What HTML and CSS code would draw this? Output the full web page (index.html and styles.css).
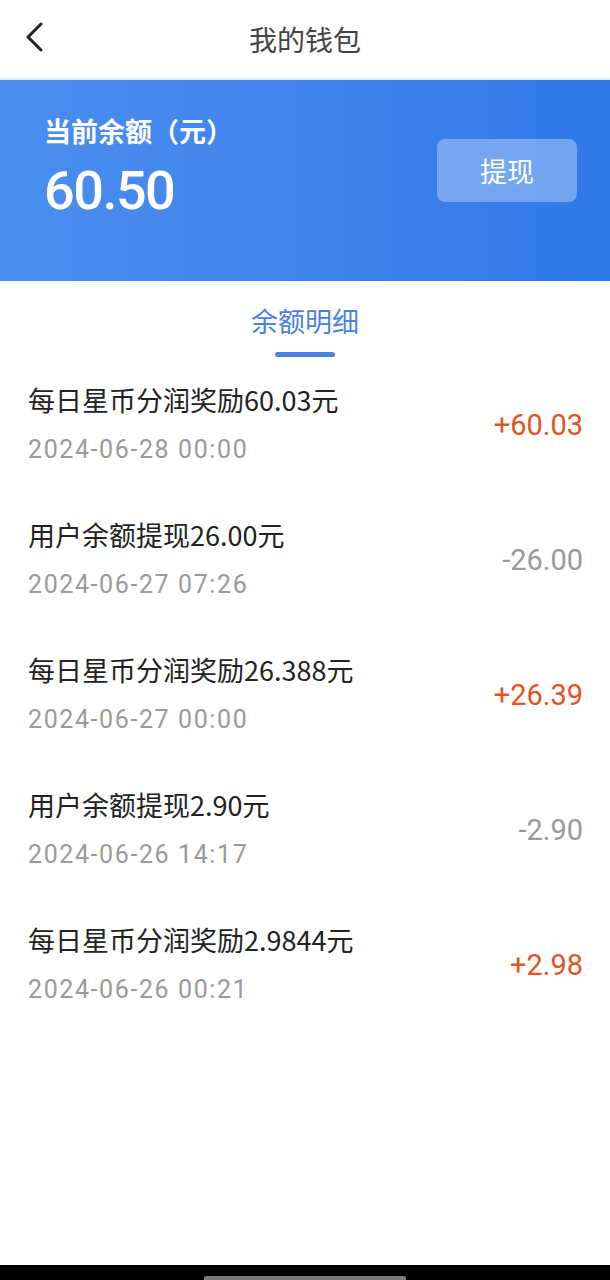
FILE: index.html
```html
<!DOCTYPE html>
<html lang="zh-CN">
<head>
  <meta charset="UTF-8">
  <title>我的钱包</title>
  <meta name="viewport" content="width=device-width, initial-scale=1.0">
  <link rel="stylesheet" href="styles.css">
</head>
<body>
  <div class="page">
    <div class="topbar">
      <button class="back-btn" aria-label="返回">
        <svg width="20" height="30" viewBox="0 0 20 30">
          <path d="M17 2 L4 15 L17 28" fill="none" stroke="#222" stroke-width="3" stroke-linecap="round" stroke-linejoin="round"/>
        </svg>
      </button>
      <h1 class="page-title">我的钱包</h1>
    </div>

    <div class="balance-card">
      <div class="balance-info">
        <div class="balance-label">当前余额（元）</div>
        <div class="balance-value">60.50</div>
      </div>
      <button class="withdraw-btn">提现</button>
    </div>

    <div class="tabs">
      <div class="tab active">余额明细</div>
      <div class="tab-line"></div>
    </div>

    <div class="record-list">
      <div class="record">
        <div class="record-main">
          <div class="record-title">每日星币分润奖励60.03元</div>
          <div class="record-time">2024-06-28 00:00</div>
        </div>
        <div class="record-amount plus">+60.03</div>
      </div>
      <div class="record">
        <div class="record-main">
          <div class="record-title">用户余额提现26.00元</div>
          <div class="record-time">2024-06-27 07:26</div>
        </div>
        <div class="record-amount minus">-26.00</div>
      </div>
      <div class="record">
        <div class="record-main">
          <div class="record-title">每日星币分润奖励26.388元</div>
          <div class="record-time">2024-06-27 00:00</div>
        </div>
        <div class="record-amount plus">+26.39</div>
      </div>
      <div class="record">
        <div class="record-main">
          <div class="record-title">用户余额提现2.90元</div>
          <div class="record-time">2024-06-26 14:17</div>
        </div>
        <div class="record-amount minus">-2.90</div>
      </div>
      <div class="record">
        <div class="record-main">
          <div class="record-title">每日星币分润奖励2.9844元</div>
          <div class="record-time">2024-06-26 00:21</div>
        </div>
        <div class="record-amount plus">+2.98</div>
      </div>
    </div>

    <div class="nav-bar">
      <div class="nav-pill"></div>
    </div>
  </div>
</body>
</html>
```

FILE: styles.css
```css
:root {
  --blue: #3f84ec;
  --tab-blue: #4a82e4;
  --orange: #e2541f;
  --grey: #9a9a9a;
  --text: #222;
  --white: #fff;
}
body {
  margin: 0;
  padding: 0;
  background: var(--white);
  font-family: "Noto Sans CJK SC", "Noto Sans", sans-serif;
  color: var(--text);
}
.page {
  display: flex;
  flex-direction: column;
  min-height: 1280px;
}
/* Top bar */
.topbar {
  height: 78px;
  display: flex;
  align-items: center;
  justify-content: center;
  position: relative;
  border-bottom: 2px solid #e1ebf8;
}
.back-btn {
  position: absolute;
  left: 24px;
  top: 22px;
  padding: 0;
  border: none;
  background: none;
  width: 20px;
  height: 30px;
}
.back-btn svg { display: block; }
.page-title {
  margin: 0;
  font-size: 28px;
  font-weight: 400;
  color: #444;
  line-height: 36px;
}
/* Balance card */
.balance-card {
  height: 201px;
  background: linear-gradient(90deg, #4c8ef0 0%, #3f84ec 50%, #2f78e8 100%);
  display: flex;
  justify-content: space-between;
  align-items: flex-start;
  padding: 0 33px 0 44px;
  box-sizing: border-box;
}
.balance-info {
  padding-top: 33px;
  color: var(--white);
}
.balance-label {
  font-size: 27px;
  font-weight: 700;
  line-height: 36px;
}
.balance-value {
  font-family: Roboto, sans-serif;
  font-size: 54px;
  font-weight: 500;
  line-height: 60px;
  margin-top: 12px;
  letter-spacing: -1.5px;
}
.withdraw-btn {
  margin-top: 59px;
  width: 140px;
  height: 63px;
  border: none;
  border-radius: 8px;
  background: rgba(255, 255, 255, 0.32);
  color: var(--white);
  font-family: "Noto Sans CJK SC", sans-serif;
  font-size: 27px;
}
/* Tabs */
.tabs {
  display: flex;
  flex-direction: column;
  align-items: center;
  padding-top: 22px;
}
.tab {
  font-size: 27px;
  line-height: 36px;
  color: var(--tab-blue);
}
.tab-line {
  width: 60px;
  height: 5px;
  border-radius: 3px;
  background: var(--tab-blue);
  margin-top: 13px;
}
/* Records */
.record {
  height: 135px;
  display: flex;
  align-items: center;
  justify-content: space-between;
  padding: 0 27px 0 28px;
}
.record-title {
  font-size: 27px;
  line-height: 36px;
  color: var(--text);
}
.record-time {
  font-family: Roboto, sans-serif;
  font-size: 25px;
  letter-spacing: 1.6px;
  line-height: 36px;
  margin-top: 14px;
  color: var(--grey);
}
.record-amount {
  font-family: Roboto, sans-serif;
  font-size: 29px;
}
.record-amount.plus { color: var(--orange); }
.record-amount.minus { color: var(--grey); }
/* Bottom gesture bar */
.nav-bar {
  margin-top: auto;
  height: 15px;
  background: #000;
  display: flex;
  justify-content: center;
  align-items: flex-end;
}
.nav-pill {
  width: 202px;
  height: 4px;
  border-radius: 2px 2px 0 0;
  background: #7a7a7a;
}
```
